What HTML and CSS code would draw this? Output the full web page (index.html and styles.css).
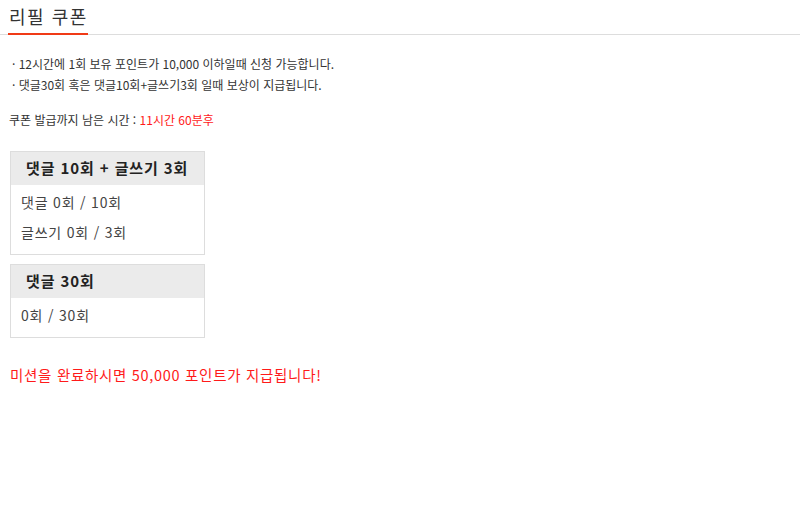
FILE: index.html
```html
<!DOCTYPE html>
<html lang="ko">
<head>
    <meta charset="UTF-8">
    <meta name="viewport" content="width=device-width, initial-scale=1.0">
    <title>리필 쿠폰</title>
    <link rel="stylesheet" href="styles.css">
</head>
<body>

<div class="title-bar">
    <h2 class="title">리필 쿠폰</h2>
</div>

<div class="content">
    <ul class="notice">
        <li>· 12시간에 1회 보유 포인트가 10,000 이하일때 신청 가능합니다.</li>
        <li>· 댓글30회 혹은 댓글10회+글쓰기3회 일때 보상이 지급됩니다.</li>
    </ul>

    <p class="remain">쿠폰 발급까지 남은 시간 : <span class="red">11시간 60분후</span></p>

    <div class="mission">
        <div class="mission-head">댓글 10회 + 글쓰기 3회</div>
        <div class="mission-body">
            <p>댓글 0회 / 10회</p>
            <p>글쓰기 0회 / 3회</p>
        </div>
    </div>

    <div class="mission">
        <div class="mission-head">댓글 30회</div>
        <div class="mission-body">
            <p>0회 / 30회</p>
        </div>
    </div>

    <p class="reward">미션을 완료하시면 50,000 포인트가 지급됩니다!</p>
</div>

</body>
</html>
```

FILE: styles.css
```css
body {
    margin: 0;
    font-family: "Noto Sans CJK KR", "Liberation Sans", sans-serif;
    background-color: #fff;
    color: #333;
}
.title-bar {
    padding-left: 8px;
    border-bottom: 1px solid #dddddd;
}
.title {
    display: inline-block;
    margin: 0 0 -1px 0;
    padding: 4px 0 5px 1px;
    font-size: 18px;
    line-height: 24px;
    font-weight: normal;
    letter-spacing: 1.5px;
    color: #333;
    border-bottom: 2px solid #f03a17;
}
.content {
    padding-left: 10px;
}
.notice {
    list-style: none;
    margin: 18px 0 0 0;
    padding: 0 0 0 2px;
    font-size: 12px;
    line-height: 21px;
    color: #333;
}
.remain {
    margin: 14px 0 0 -1px;
    font-size: 12px;
    line-height: 21px;
}
.red {
    color: #ff1a1a;
}
.mission {
    width: 193px;
    margin-top: 9px;
    border: 1px solid #dddddd;
}
.remain + .mission {
    margin-top: 21px;
}
.mission-head {
    height: 33px;
    padding-left: 15px;
    background-color: #ebebeb;
    font-size: 15px;
    font-weight: bold;
    line-height: 31px;
    letter-spacing: 0.9px;
    color: #222;
}
.mission-body {
    padding: 2px 10px 7px 10px;
}
.mission-body p {
    margin: 0;
    font-size: 14px;
    line-height: 30px;
    letter-spacing: 0.8px;
    color: #444;
}
.reward {
    margin: 27px 0 0 0;
    font-size: 14.5px;
    line-height: 20px;
    letter-spacing: 0.7px;
    color: #ff1a1a;
}
```
